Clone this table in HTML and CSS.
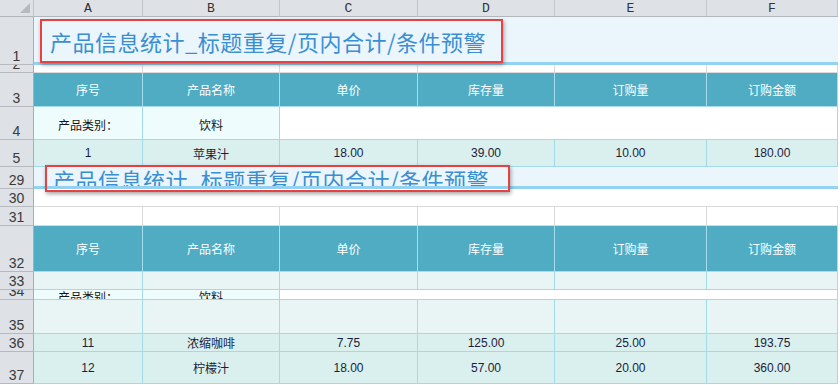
FILE: index.html
```html
<!DOCTYPE html>
<html lang="zh-CN">
<head>
<meta charset="utf-8">
<title>产品信息统计</title>
<link rel="stylesheet" href="styles.css">
</head>
<body>
<div class="sheet">
  <div class="row h-col">
    <div class="corner"><span class="tri"></span></div>
    <div class="colh">A</div><div class="colh">B</div><div class="colh">C</div>
    <div class="colh">D</div><div class="colh">E</div><div class="colh">F</div>
  </div>

  <div class="row h-r1">
    <div class="rh">1</div>
    <div class="c title t1 span6"><span>产品信息统计_标题重复/页内合计/条件预警</span></div>
  </div>
  <div class="row h-r2">
    <div class="rh">2</div>
    <div class="c blank"></div><div class="c blank"></div><div class="c blank"></div>
    <div class="c blank"></div><div class="c blank"></div><div class="c blank"></div>
  </div>
  <div class="row h-r3">
    <div class="rh">3</div>
    <div class="c th">序号</div><div class="c th">产品名称</div><div class="c th">单价</div>
    <div class="c th">库存量</div><div class="c th">订购量</div><div class="c th">订购金额</div>
  </div>
  <div class="row h-r4">
    <div class="rh">4</div>
    <div class="c cat lower">产品类别：</div><div class="c cat lower">饮料</div>
    <div class="c white span4"></div>
  </div>
  <div class="row h-r5">
    <div class="rh">5</div>
    <div class="c td">1</div><div class="c td">苹果汁</div><div class="c td">18.00</div>
    <div class="c td">39.00</div><div class="c td">10.00</div><div class="c td">180.00</div>
  </div>

  <div class="row h-r29">
    <div class="rh">29</div>
    <div class="c title t2 span6"><span>产品信息统计_标题重复/页内合计/条件预警</span></div>
  </div>
  <div class="row h-r30">
    <div class="rh">30</div>
    <div class="c blank span6 nov"></div>
  </div>
  <div class="row h-r31">
    <div class="rh">31</div>
    <div class="c blank"></div><div class="c blank"></div><div class="c blank"></div>
    <div class="c blank"></div><div class="c blank"></div><div class="c blank"></div>
  </div>
  <div class="row h-r32">
    <div class="rh">32</div>
    <div class="c th">序号</div><div class="c th">产品名称</div><div class="c th">单价</div>
    <div class="c th">库存量</div><div class="c th">订购量</div><div class="c th">订购金额</div>
  </div>
  <div class="row h-r33">
    <div class="rh">33</div>
    <div class="c pale"></div><div class="c pale"></div><div class="c pale"></div>
    <div class="c pale"></div><div class="c pale"></div><div class="c pale"></div>
  </div>
  <div class="row h-r34">
    <div class="rh">34</div>
    <div class="c cat clip">产品类别：</div><div class="c cat clip">饮料</div>
    <div class="c white span4"></div>
  </div>
  <div class="row h-r35">
    <div class="rh">35</div>
    <div class="c pale"></div><div class="c pale"></div><div class="c pale"></div>
    <div class="c pale"></div><div class="c pale"></div><div class="c pale"></div>
  </div>
  <div class="row h-r36">
    <div class="rh">36</div>
    <div class="c td">11</div><div class="c td">浓缩咖啡</div><div class="c td">7.75</div>
    <div class="c td">125.00</div><div class="c td">25.00</div><div class="c td">193.75</div>
  </div>
  <div class="row h-r37">
    <div class="rh">37</div>
    <div class="c td">12</div><div class="c td">柠檬汁</div><div class="c td">18.00</div>
    <div class="c td">57.00</div><div class="c td">20.00</div><div class="c td">360.00</div>
  </div>

  <div class="mark mark1"></div>
  <div class="mark mark2"></div>
</div>
</body>
</html>
```

FILE: styles.css
```css
* { box-sizing: border-box; }
html, body { margin: 0; padding: 0; background: #ffffff; }
body {
  width: 840px;
  height: 385px;
  overflow: hidden;
  font-family: "Liberation Sans", "Noto Sans CJK SC", sans-serif;
  font-size: 12px;
  color: #1c1c3c;
}
.sheet {
  position: relative;
  width: 838px;
}
.row {
  display: grid;
  grid-template-columns: 34px 109px 137px 138px 137px 152px 131px;
}
.h-col { height: 17px; }
.h-r1 { height: 48px; }
.h-r2 { height: 8px; }
.h-r3 { height: 34px; }
.h-r4 { height: 33px; }
.h-r5 { height: 27px; }
.h-r29 { height: 22px; }
.h-r30 { height: 18px; }
.h-r31 { height: 19px; }
.h-r32 { height: 46px; }
.h-r33 { height: 18px; }
.h-r34 { height: 10px; }
.h-r35 { height: 34px; }
.h-r36 { height: 18px; }
.h-r37 { height: 32px; }

/* column header */
.corner {
  position: relative;
  background: #dee1e6;
  border-right: 1px solid #c3c6cb;
  border-bottom: 1px solid #b3b6bb;
}
.tri {
  position: absolute;
  right: 3px;
  bottom: 3px;
  width: 0;
  height: 0;
  border-left: 10px solid transparent;
  border-bottom: 10px solid #b6b9be;
}
.colh {
  background: #dee1e6;
  border-right: 1px solid #c3c6cb;
  border-bottom: 1px solid #b3b6bb;
  font-family: "Liberation Mono", "DejaVu Sans Mono", monospace;
  font-size: 13px;
  color: #333333;
  display: flex;
  align-items: flex-end;
  justify-content: center;
  line-height: 15px;
}

/* row header */
.rh {
  background: #dee1e6;
  border-right: 1px solid #a9adb3;
  border-bottom: 1px solid #b6b9be;
  font-size: 14px;
  line-height: 15px;
  color: #3a3a3a;
  display: flex;
  align-items: flex-end;
  justify-content: center;
  overflow: hidden;
}

/* cells */
.c {
  display: flex;
  align-items: center;
  justify-content: center;
  overflow: hidden;
  border-right: 1px solid #a3daea;
  border-bottom: 1px solid #a3daea;
  white-space: nowrap;
}
.span6 { grid-column: span 6; }
.span4 { grid-column: span 4; }

.title {
  background: #eaf5fc;
  border-right: none;
  border-bottom: 3px solid #93d3f1;
  justify-content: flex-start;
  align-items: flex-start;
  font-family: "Noto Sans CJK SC", "Liberation Sans", sans-serif;
  font-size: 22px;
  line-height: 22px;
  letter-spacing: 0.5px;
  color: #3a8fd3;
}
.t1 { padding: 13px 0 0 16px; }
.t2 { padding: 1px 0 0 19px; }

.blank {
  background: #ffffff;
  border-right: 1px solid #dadada;
  border-bottom: 1px solid #dadada;
}
.nov { border-right: none; }

.th {
  background: #4facc3;
  color: #ffffff;
  border-right: 1px solid #a6dcec;
  border-bottom: 1px solid #a6dcec;
  font-family: "Noto Sans CJK SC", sans-serif;
}
.cat {
  background: #effcfd;
  font-family: "Liberation Sans", "Noto Sans CJK SC", sans-serif;
  color: #151515;
}
.lower { padding-top: 3px; }
.clip { align-items: flex-start; line-height: 14px; padding-top: 1px; }
.white { background: #ffffff; }
.td { background: #daf0ef; }
.pale { background: #e9f4f5; }

/* red annotation frames over the sheet */
.mark {
  position: absolute;
  border: 2px solid #ea4040;
  box-shadow: 1px 2px 4px rgba(0, 0, 0, 0.35);
  pointer-events: none;
}
.mark1 { left: 40px; top: 19px; width: 463px; height: 44px; }
.mark2 { left: 45px; top: 165px; width: 465px; height: 27px; }
```
